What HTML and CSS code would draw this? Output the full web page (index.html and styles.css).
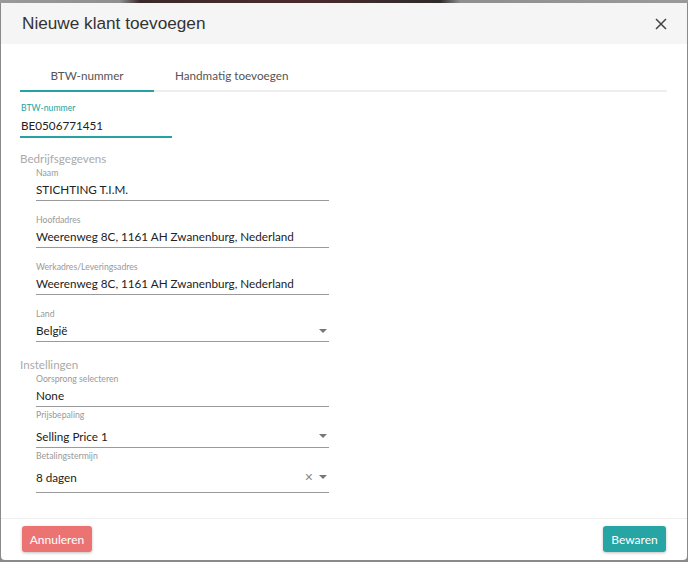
FILE: index.html
```html
<!DOCTYPE html>
<html lang="nl">
<head>
<meta charset="utf-8">
<title>Nieuwe klant toevoegen</title>
<link rel="stylesheet" href="styles.css">
</head>
<body>
<div class="backdrop"></div>
<div class="dialog">
  <header class="dlg-head">
    <h1 class="dlg-title">Nieuwe klant toevoegen</h1>
    <button class="close" aria-label="Sluiten">
      <svg width="12" height="12" viewBox="0 0 12 12"><path d="M1 1L11 11M11 1L1 11" stroke="#444" stroke-width="1.5" fill="none"/></svg>
    </button>
  </header>
  <main class="dlg-body">
    <nav class="tabs">
      <div class="tab active">BTW-nummer</div>
      <div class="tab">Handmatig toevoegen</div>
    </nav>
    <div class="field vat">
      <div class="label teal">BTW-nummer</div>
      <div class="value">BE0506771451</div>
    </div>
    <div class="section-title first">Bedrijfsgegevens</div>
    <div class="group">
      <div class="field">
        <div class="label">Naam</div>
        <div class="value">STICHTING T.I.M.</div>
      </div>
      <div class="field">
        <div class="label">Hoofdadres</div>
        <div class="value">Weerenweg 8C, 1161 AH Zwanenburg, Nederland</div>
      </div>
      <div class="field">
        <div class="label">Werkadres/Leveringsadres</div>
        <div class="value">Weerenweg 8C, 1161 AH Zwanenburg, Nederland</div>
      </div>
      <div class="field">
        <div class="label">Land</div>
        <div class="value select"><span>België</span><span class="arrow"></span></div>
      </div>
    </div>
    <div class="section-title second">Instellingen</div>
    <div class="group tight">
      <div class="field">
        <div class="label">Oorsprong selecteren</div>
        <div class="value">None</div>
      </div>
      <div class="field">
        <div class="label">Prijsbepaling</div>
        <div class="value select tall"><span>Selling Price 1</span><span class="arrow"></span></div>
      </div>
      <div class="field">
        <div class="label">Betalingstermijn</div>
        <div class="value select taller"><span>8 dagen</span><span class="icons"><span class="clear">×</span><span class="arrow"></span></span></div>
      </div>
    </div>
  </main>
  <footer class="dlg-foot">
    <button class="btn cancel">Annuleren</button>
    <button class="btn save">Bewaren</button>
  </footer>
</div>
</body>
</html>
```
FILE: styles.css
```css
*, *::before, *::after {
  box-sizing: border-box;
}
html, body {
  margin: 0;
  padding: 0;
}
body {
  width: 688px;
  height: 562px;
  background: #8a8a8a;
  font-family: "Lato", "Liberation Sans", sans-serif;
  overflow: hidden;
}
.backdrop {
  height: 3px;
  background: linear-gradient(90deg, #9a9a9a 0, #8f8f8f 120px, #3a2a2c 140px, #4a2a30 300px, #2e2a2a 440px, #8f8f8f 460px, #9a9a9a 100%);
}
.dialog {
  margin: 0 1px;
  width: 686px;
  height: 557px;
  background: #fff;
  border-radius: 0 0 4px 4px;
  display: flex;
  flex-direction: column;
  overflow: hidden;
}
.dlg-head {
  height: 41px;
  flex: none;
  background: #f5f5f5;
  display: flex;
  align-items: center;
  justify-content: space-between;
  padding: 0 20px 0 21px;
}
.dlg-title {
  margin: 0;
  font-family: "Liberation Sans", Arial, sans-serif;
  font-weight: normal;
  font-size: 17.2px;
  color: #333;
}
.close {
  border: 0;
  background: none;
  padding: 0;
  width: 12px;
  height: 12px;
  display: flex;
}
.dlg-body {
  flex: 1;
  padding: 16px 20px 0 19px;
}
.tabs {
  display: flex;
  border-bottom: 2px solid #eeeeee;
}
.tab {
  height: 32px;
  display: flex;
  align-items: center;
  justify-content: center;
  font-size: 11.7px;
  color: #555;
  padding: 0 21px;
  margin-bottom: -2px;
  border-bottom: 2px solid transparent;
}
.tab.active {
  width: 134px;
  padding: 0;
  border-bottom-color: #26a2a2;
}
.field {
  display: flex;
  flex-direction: column;
}
.label {
  font-size: 8.7px;
  line-height: 12px;
  color: #999;
}
.label.teal {
  color: #26a2a2;
}
.value {
  font-size: 11.7px;
  line-height: 21px;
  color: #222;
  border-bottom: 1px solid #9a9a9a;
}
.vat {
  margin-top: 10px;
  width: 152px;
}
.vat .value {
  line-height: 22px;
  border-bottom: 2px solid #26a2a2;
  padding-left: 1px;
}
.vat .label {
  padding-left: 1px;
}
.section-title {
  font-size: 11.6px;
  line-height: 14px;
  color: #aaa;
}
.section-title.first {
  margin-top: 14px;
  margin-bottom: 1px;
}
.section-title.second {
  margin-top: 16px;
  margin-bottom: 1px;
}
.group {
  padding-left: 16px;
  width: 309px;
  display: flex;
  flex-direction: column;
  gap: 13px;
}
.group.tight {
  gap: 2px;
}
.select {
  display: flex;
  align-items: center;
  justify-content: space-between;
}
.select.tall {
  padding-top: 4px;
  line-height: 22px;
}
.select.taller {
  padding-top: 4px;
  padding-bottom: 4px;
  line-height: 22px;
}
.arrow {
  width: 0;
  height: 0;
  border-left: 4px solid transparent;
  border-right: 4px solid transparent;
  border-top: 4px solid #777;
  margin-right: 2px;
}
.icons {
  display: flex;
  align-items: center;
  gap: 6px;
}
.clear {
  font-family: "Liberation Sans", sans-serif;
  font-size: 14px;
  color: #888;
  line-height: 14px;
}
.dlg-foot {
  flex: none;
  height: 42px;
  border-top: 1px solid #eeeeee;
  display: flex;
  justify-content: space-between;
  align-items: flex-start;
  padding: 7px 21px 0 21px;
}
.btn {
  height: 26px;
  border: 0;
  border-radius: 3px;
  color: #fff;
  font-family: "Lato", sans-serif;
  font-size: 12px;
  padding: 0 6px;
  box-shadow: 0 1px 3px rgba(0,0,0,0.25);
}
.cancel {
  width: 70px;
  background: #eb7473;
}
.save {
  width: 63px;
  background: #27a5a5;
}
```
